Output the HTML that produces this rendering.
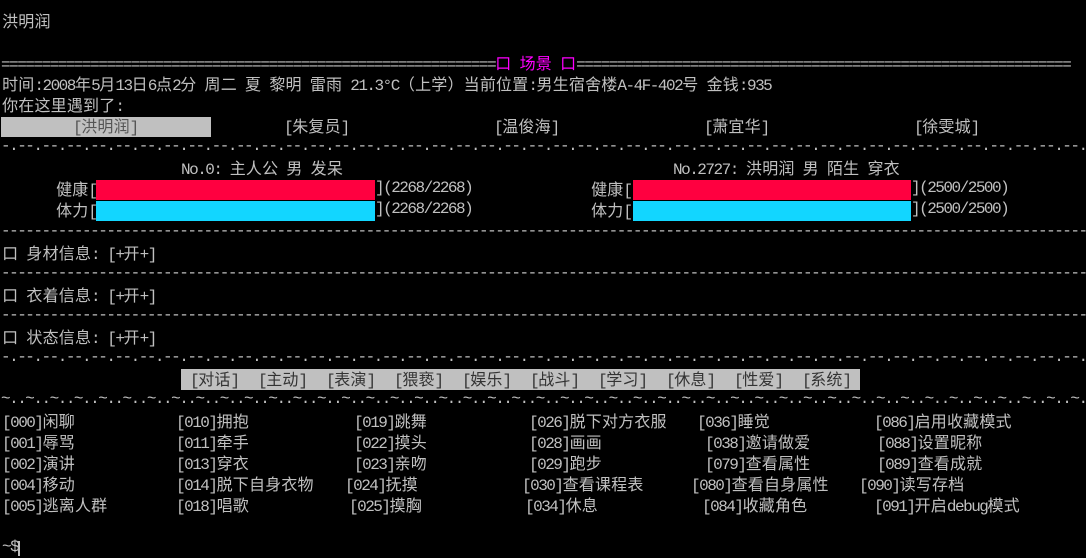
<!DOCTYPE html>
<html><head><meta charset="utf-8"><style>
body{margin:0;width:1086px;height:558px;background:#000;overflow:hidden;position:relative;color:#c0c0c0;font-family:"Liberation Mono","Noto Sans CJK SC",monospace;font-size:16px}
.t{position:absolute;white-space:pre;line-height:21px;height:21px;letter-spacing:-1.5px}
.c{font-family:"Noto Sans CJK SC",sans-serif;font-size:16px;letter-spacing:0;display:inline-block;width:16.2px;text-align:center;line-height:21px}
.full{left:1px;width:1085px;overflow:hidden}
.bar{position:absolute;height:20px}
.m{color:#ff00ff}
</style></head><body>
<div class="t" style="left:2px;top:10px">洪明润</div>
<div class="t full" style="top:52px">=============================================================<span class="m">口 场景 口</span>=============================================================</div>
<div class="t" style="left:2px;top:73px">时间:2008年5月13日6点2分 周二 夏 黎明 雷雨 21.3°C（上学）当前位置:男生宿舍楼A-4F-402号 金钱:935</div>
<div class="t" style="left:2px;top:94px">你在这里遇到了:</div>
<div class="bar" style="left:1px;top:117px;width:210px;background:#c0c0c0"></div>
<div class="t" style="left:73px;top:115px;color:#555">[洪明润]</div>
<div class="t" style="left:284px;top:115px">[朱复员]</div>
<div class="t" style="left:494px;top:115px">[温俊海]</div>
<div class="t" style="left:704px;top:115px">[萧宜华]</div>
<div class="t" style="left:914px;top:115px">[徐雯城]</div>
<div class="t full" style="top:136px">-.--.--.--.--.--.--.--.--.--.--.--.--.--.--.--.--.--.--.--.--.--.--.--.--.--.--.--.--.--.--.--.--.--.--.--.--.--.--.--.--.--.--.--.--.--.--.--.--.</div>
<div class="t" style="left:181px;top:157px">No.0: 主人公 男 发呆</div>
<div class="t" style="left:673px;top:157px">No.2727: 洪明润 男 陌生 穿衣</div>
<div class="t" style="left:56px;top:178px">健康[</div>
<div class="bar" style="left:96px;top:180px;width:279px;background:#ff0040"></div>
<div class="t" style="left:375px;top:178px">](2268/2268)</div>
<div class="t" style="left:56px;top:199px">体力[</div>
<div class="bar" style="left:96px;top:201px;width:279px;background:#12d6ff"></div>
<div class="t" style="left:375px;top:199px">](2268/2268)</div>
<div class="t" style="left:591px;top:178px">健康[</div>
<div class="bar" style="left:633px;top:180px;width:278px;background:#ff0040"></div>
<div class="t" style="left:911px;top:178px">](2500/2500)</div>
<div class="t" style="left:591px;top:199px">体力[</div>
<div class="bar" style="left:633px;top:201px;width:278px;background:#12d6ff"></div>
<div class="t" style="left:911px;top:199px">](2500/2500)</div>
<div class="t full" style="top:221px">--------------------------------------------------------------------------------------------------------------------------------------------</div>
<div class="t" style="left:2px;top:242px">口 身材信息: [+开+]</div>
<div class="t full" style="top:263px">--------------------------------------------------------------------------------------------------------------------------------------------</div>
<div class="t" style="left:2px;top:284px">口 衣着信息: [+开+]</div>
<div class="t full" style="top:305px">--------------------------------------------------------------------------------------------------------------------------------------------</div>
<div class="t" style="left:2px;top:326px">口 状态信息: [+开+]</div>
<div class="t full" style="top:347px">-.--.--.--.--.--.--.--.--.--.--.--.--.--.--.--.--.--.--.--.--.--.--.--.--.--.--.--.--.--.--.--.--.--.--.--.--.--.--.--.--.--.--.--.--.--.--.--.--.</div>
<div class="bar" style="left:181px;top:369px;width:679px;height:21px;background:#c0c0c0"></div>
<div class="t" style="left:190px;top:368px;color:#333">[对话]</div>
<div class="t" style="left:258px;top:368px;color:#333">[主动]</div>
<div class="t" style="left:326px;top:368px;color:#333">[表演]</div>
<div class="t" style="left:394px;top:368px;color:#333">[猥亵]</div>
<div class="t" style="left:462px;top:368px;color:#333">[娱乐]</div>
<div class="t" style="left:530px;top:368px;color:#333">[战斗]</div>
<div class="t" style="left:598px;top:368px;color:#333">[学习]</div>
<div class="t" style="left:666px;top:368px;color:#333">[休息]</div>
<div class="t" style="left:734px;top:368px;color:#333">[性爱]</div>
<div class="t" style="left:802px;top:368px;color:#333">[系统]</div>
<div class="t full" style="top:389px">~..~..~..~..~..~..~..~..~..~..~..~..~..~..~..~..~..~..~..~..~..~..~..~..~..~..~..~..~..~..~..~..~..~..~..~..~..~..~..~..~..~..~..~..~..~..~..~..~..</div>

<div class="t" style="left:2px;top:410px">[000]闲聊</div>
<div class="t" style="left:2px;top:431px">[001]辱骂</div>
<div class="t" style="left:2px;top:452px">[002]演讲</div>
<div class="t" style="left:2px;top:473px">[004]移动</div>
<div class="t" style="left:2px;top:494px">[005]逃离人群</div>
<div class="t" style="left:176px;top:410px">[010]拥抱</div>
<div class="t" style="left:176px;top:431px">[011]牵手</div>
<div class="t" style="left:176px;top:452px">[013]穿衣</div>
<div class="t" style="left:176px;top:473px">[014]脱下自身衣物</div>
<div class="t" style="left:176px;top:494px">[018]唱歌</div>
<div class="t" style="left:354px;top:410px">[019]跳舞</div>
<div class="t" style="left:354px;top:431px">[022]摸头</div>
<div class="t" style="left:354px;top:452px">[023]亲吻</div>
<div class="t" style="left:345px;top:473px">[024]抚摸</div>
<div class="t" style="left:349px;top:494px">[025]摸胸</div>
<div class="t" style="left:529px;top:410px">[026]脱下对方衣服</div>
<div class="t" style="left:529px;top:431px">[028]画画</div>
<div class="t" style="left:529px;top:452px">[029]跑步</div>
<div class="t" style="left:522px;top:473px">[030]查看课程表</div>
<div class="t" style="left:525px;top:494px">[034]休息</div>
<div class="t" style="left:697px;top:410px">[036]睡觉</div>
<div class="t" style="left:705px;top:431px">[038]邀请做爱</div>
<div class="t" style="left:705px;top:452px">[079]查看属性</div>
<div class="t" style="left:691px;top:473px">[080]查看自身属性</div>
<div class="t" style="left:702px;top:494px">[084]收藏角色</div>
<div class="t" style="left:874px;top:410px">[086]启用收藏模式</div>
<div class="t" style="left:877px;top:431px">[088]设置昵称</div>
<div class="t" style="left:877px;top:452px">[089]查看成就</div>
<div class="t" style="left:859px;top:473px">[090]读写存档</div>
<div class="t" style="left:874px;top:494px">[091]开启debug模式</div>
<div class="t" style="left:2px;top:537px">~$</div>
<div class="bar" style="left:18px;top:541px;width:2px;height:15px;background:#c0c0c0"></div>
<script>
document.querySelectorAll('.t').forEach(function(e){
 function walk(n){
  if(n.nodeType===3){
   var s=n.nodeValue;if(!/[\u2e80-\uffff]/.test(s))return;
   var f=document.createDocumentFragment();
   s.split(/([\u2e80-\u9fff\uff00-\uffef\u3000-\u303f])/).forEach(function(p,i){
    if(!p)return;
    if(i%2){var sp=document.createElement('span');sp.className='c';sp.textContent=p;f.appendChild(sp);}
    else f.appendChild(document.createTextNode(p));
   });
   n.parentNode.replaceChild(f,n);
  } else Array.prototype.slice.call(n.childNodes).forEach(walk);
 }
 walk(e);
});
</script>
</body></html>
